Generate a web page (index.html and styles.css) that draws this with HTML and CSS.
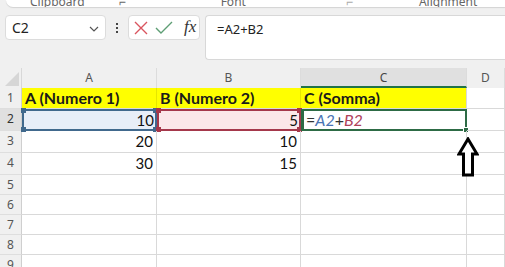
FILE: index.html
```html
<!DOCTYPE html>
<html>
<head>
<meta charset="utf-8">
<link rel="stylesheet" href="styles.css">
</head>
<body>
<div class="ribbon">
  <span class="grp g1">Clipboard</span><span class="grp g2">⌐</span>
  <span class="grp g3">Font</span><span class="grp g4">⌐</span>
  <span class="grp g5">Alignment</span>
</div>
<div class="fbar">
  <div class="namebox">
    <span class="nb-text">C2</span>
    <svg class="chev" width="10" height="6" viewBox="0 0 10 6"><path d="M1 1 L5 5 L9 1" fill="none" stroke="#555" stroke-width="1.2"/></svg>
  </div>
  <div class="dots"><i></i><i></i><i></i></div>
  <div class="fxbox">
    <svg width="14" height="14" viewBox="0 0 14 14"><path d="M1 1 L13 13 M13 1 L1 13" stroke="#d9555f" stroke-width="1.4" fill="none"/></svg>
    <svg width="18" height="14" viewBox="0 0 18 14"><path d="M1 7 L6 12 L17 1" stroke="#5e9e74" stroke-width="1.4" fill="none"/></svg>
    <span class="fx">fx</span>
  </div>
  <div class="formula">=A2+B2</div>
</div>
<div class="sheet">
  <div class="corner"><svg width="14" height="14" viewBox="0 0 14 14"><path d="M14 0 L14 14 L0 14 Z" fill="#d6d6d6"/></svg></div>
  <div class="ch">A</div><div class="ch">B</div><div class="ch ch-sel">C</div><div class="ch">D</div>

  <div class="rh r1">1</div>
  <div class="c hdr">A (Numero 1)</div><div class="c hdr">B (Numero 2)</div><div class="c hdr hdr-last">C (Somma)</div><div class="c"></div>

  <div class="rh r2 rh-sel">2</div>
  <div class="c num refA">10<i class="h tl"></i><i class="h tr"></i><i class="h bl"></i><i class="h br"></i></div>
  <div class="c num refB">5<i class="h tl"></i><i class="h tr"></i><i class="h bl"></i><i class="h br"></i></div>
  <div class="c active"><span class="fop">=</span><span class="ra">A2</span><span class="fop">+</span><span class="rb">B2</span><i class="fill"></i></div>
  <div class="c"></div>

  <div class="rh r3">3</div>
  <div class="c num">20</div><div class="c num">10</div><div class="c"></div><div class="c"></div>

  <div class="rh r4">4</div>
  <div class="c num">30</div><div class="c num">15</div><div class="c"></div><div class="c"></div>

  <div class="rh">5</div><div class="c"></div><div class="c"></div><div class="c"></div><div class="c"></div>
  <div class="rh">6</div><div class="c"></div><div class="c"></div><div class="c"></div><div class="c"></div>
  <div class="rh">7</div><div class="c"></div><div class="c"></div><div class="c"></div><div class="c"></div>
  <div class="rh">8</div><div class="c"></div><div class="c"></div><div class="c"></div><div class="c"></div>
  <div class="rh">9</div><div class="c"></div><div class="c"></div><div class="c"></div><div class="c"></div>

  <svg class="arrow" width="22" height="40" viewBox="0 0 22 40"><path d="M11 2 L20 17 L15.5 17 L15.5 38 L6.5 38 L6.5 17 L2 17 Z" fill="#fff" stroke="#000" stroke-width="3" stroke-linejoin="miter"/></svg>
</div>
</body>
</html>
```

FILE: styles.css
```css
* { box-sizing: border-box; }
html, body { margin: 0; padding: 0; }
body {
  width: 505px;
  height: 267px;
  overflow: hidden;
  background: #f0f0f0;
  font-family: "Noto Sans", "Liberation Sans", sans-serif;
}
.ribbon {
  position: relative;
  height: 7px;
  margin-left: 6px;
  background: #fff;
  border-bottom-left-radius: 7px;
  box-shadow: 0 1px 1px rgba(0,0,0,0.12);
  display: flex;
  align-items: flex-end;
  overflow: hidden;
  font-size: 12px;
  color: #666;
  line-height: 10px;
}
.grp { display: block; }
.g1 { margin-left: 24px; }
.g2 { margin-left: 34px; }
.g3 { margin-left: 95px; }
.g4 { margin-left: 100px; color: #aaa; }
.g5 { margin-left: 66px; }

.fbar {
  display: flex;
  align-items: flex-start;
  padding: 8px 0 0 5px;
  height: 61px;
}
.namebox {
  width: 101px;
  height: 25px;
  background: #fff;
  border: 1px solid #dcdcdc;
  border-radius: 4px;
  display: flex;
  align-items: center;
  justify-content: space-between;
  padding: 0 6px 0 6px;
  font-size: 14px;
  color: #222;
}
.chev { margin-top: 2px; }
.dots {
  width: 22px;
  height: 25px;
  display: flex;
  flex-direction: column;
  align-items: center;
  justify-content: center;
  gap: 2px;
}
.dots i { display: block; width: 2px; height: 2px; background: #444; }
.fxbox {
  width: 72px;
  height: 25px;
  background: #fff;
  border: 1px solid #dcdcdc;
  border-radius: 4px;
  display: flex;
  align-items: center;
  padding-left: 5px;
  gap: 7px;
}
.fx {
  font-family: "Liberation Serif", "DejaVu Serif", serif;
  font-style: italic;
  font-size: 17px;
  color: #333;
  margin-left: 4px;
  margin-top: -2px;
}
.formula {
  margin-left: 5px;
  flex: 1;
  height: 45px;
  background: #fff;
  border: 1px solid #d8d8d8;
  border-right: none;
  border-radius: 4px 0 0 4px;
  padding: 4px 0 0 11px;
  font-size: 13px;
  color: #222;
}

.sheet {
  position: relative;
  display: grid;
  grid-template-columns: 22px 135px 144px 166px 38px;
  grid-template-rows: 20px 21px 22px 22px 22px 20px 20px 20px 20px 20px;
  background: #fff;
  font-family: "Lato", "Liberation Sans", sans-serif;
}
.corner {
  background: #f0f0f0;
  border-right: 1px solid #d8d8d8;
  display: flex;
  align-items: flex-end;
  justify-content: flex-end;
  padding: 0 2px 2px 0;
}
.ch {
  background: #f0f0f0;
  border-right: 1px solid #dcdcdc;
  text-align: center;
  font-family: "Noto Sans", sans-serif;
  font-size: 12px;
  line-height: 20px;
  color: #555;
}
.ch-sel {
  background: #e0e0e0;
  border-bottom: 2px solid #217346;
  color: #444;
}
.rh {
  background: #f0f0f0;
  border-right: 1px solid #cfcfcf;
  border-bottom: 1px solid #dedede;
  text-align: center;
  font-family: "Noto Sans", sans-serif;
  font-size: 12px;
  line-height: 20px;
  color: #555;
}
.rh-sel { background: #e0e0e0; color: #333; }
.c {
  position: relative;
  border-right: 1px solid #d9d9d9;
  border-bottom: 1px solid #d9d9d9;
  font-size: 15px;
  line-height: 20px;
  color: #111;
  padding: 0 3px;
  white-space: nowrap;
}
.hdr {
  background: #ffff00;
  font-weight: bold;
  font-size: 16px;
  color: #1a1a1a;
  padding-left: 3px;
  border-right-color: #e6e600;
}
.hdr-last { border-right-color: #d9d9d9; }
.num { text-align: right; }
.refA {
  background: #e8eef8;
  border: 2px solid #41698d;
  line-height: 18px;
  padding-right: 1px;
}
.refB {
  background: #fbe7e9;
  border: 2px solid #a5384b;
  line-height: 18px;
  padding-right: 1px;
}
.h {
  position: absolute;
  width: 5px;
  height: 5px;
}
.refA .h { background: #41698d; }
.refB .h { background: #a5384b; }
.tl { left: -3px; top: -3px; }
.tr { right: -3px; top: -3px; }
.bl { left: -3px; bottom: -3px; }
.br { right: -3px; bottom: -3px; }
.active {
  border: 2px solid #2d6b45;
  border-left-width: 3px;
  line-height: 18px;
  padding-left: 2px;
  font-size: 16px;
}
.fop { color: #333; }
.ra { color: #4a74b4; font-style: italic; }
.rb { color: #b0425a; font-style: italic; }
.fill {
  position: absolute;
  right: -4px;
  bottom: -4px;
  width: 6px;
  height: 6px;
  background: #2d6b45;
  border: 1px solid #fff;
}
.arrow {
  position: absolute;
  left: 457px;
  top: 69px;
}
```
